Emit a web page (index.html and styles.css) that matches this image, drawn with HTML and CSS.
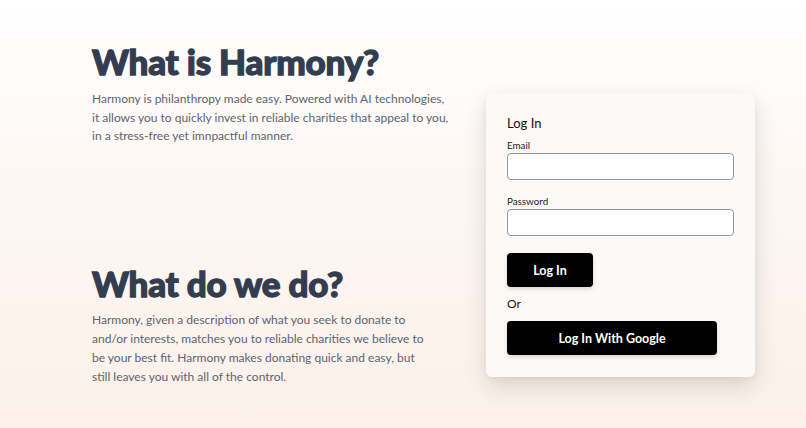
FILE: index.html
```html
<!DOCTYPE html>
<html lang="en">
<head>
<meta charset="utf-8">
<title>Harmony</title>
<link rel="stylesheet" href="styles.css">
</head>
<body>
<main class="page">
  <div class="info">
    <section class="block first">
      <h1 class="title">What is Harmony?</h1>
      <p class="text">Harmony is philanthropy made easy. Powered with AI technologies, it allows you to quickly invest in reliable charities that appeal to you, in a stress-free yet imnpactful manner.</p>
    </section>
    <section class="block second">
      <h1 class="title">What do we do?</h1>
      <p class="text narrow">Harmony, given a description of what you seek to donate to and/or interests, matches you to reliable charities we believe to be your best fit. Harmony makes donating quick and easy, but still leaves you with all of the control.</p>
    </section>
  </div>
  <form class="card">
    <h2 class="card-title">Log In</h2>
    <label class="label" for="email">Email</label>
    <input class="input" id="email" type="email">
    <label class="label pw" for="password">Password</label>
    <input class="input" id="password" type="password">
    <button class="btn login" type="button">Log In</button>
    <div class="or">Or</div>
    <button class="btn google" type="button">Log In With Google</button>
  </form>
</main>
</body>
</html>
```
FILE: styles.css
```css
html, body {
  margin: 0;
  height: 100%;
}
body {
  background: linear-gradient(to bottom, #ffffff 0%, #fdf6f1 50%, #fcf1eb 100%);
  font-family: Lato, "Noto Sans", sans-serif;
  overflow: hidden;
}
.page {
  display: flex;
  padding-left: 92px;
  height: 428px;
  box-sizing: border-box;
}
.info {
  width: 394px;
  flex: none;
}
.block {
  display: flex;
  flex-direction: column;
}
.first { margin-top: 40px; }
.second { margin-top: 116px; }
.title {
  margin: 0;
  font-size: 35px;
  line-height: 43px;
  font-weight: 900;
  color: #333d4f;
  -webkit-text-stroke: 1.3px #333d4f;
  letter-spacing: -0.2px;
}
.text {
  margin: 7px 0 0;
  font-size: 12px;
  line-height: 18.5px;
  color: #5b6472;
  width: 360px;
}
.second .text {
  margin-top: 5px;
  line-height: 19px;
}
.narrow { width: 336px; }
.card {
  margin-top: 93px;
  width: 269px;
  height: 284px;
  box-sizing: border-box;
  padding: 22px 21px;
  background: #fdf9f6;
  border-radius: 6px;
  box-shadow: 0 10px 24px rgba(0, 0, 0, 0.13), 0 2px 6px rgba(0, 0, 0, 0.05);
  display: flex;
  flex-direction: column;
  align-items: flex-start;
}
.card-title {
  margin: 0;
  font-size: 13px;
  line-height: 16px;
  font-weight: 400;
  color: #111;
}
.label {
  margin-top: 8px;
  font-size: 9.8px;
  line-height: 12px;
  color: #222;
}
.label.pw { margin-top: 15px; }
.input {
  margin-top: 2px;
  width: 227px;
  height: 27px;
  box-sizing: border-box;
  border: 1px solid #8e96a2;
  border-radius: 4px;
  background: #fff;
}
.btn {
  border: none;
  background: #000;
  color: #fff;
  font-family: inherit;
  font-size: 12.5px;
  font-weight: 700;
  border-radius: 4px;
  height: 34px;
  box-shadow: 0 2px 4px rgba(0, 0, 0, 0.15);
}
.login {
  margin-top: 17px;
  width: 86px;
}
.or {
  margin-top: 10px;
  font-size: 12px;
  line-height: 14px;
  color: #111;
}
.google {
  margin-top: 10px;
  width: 210px;
}
```
